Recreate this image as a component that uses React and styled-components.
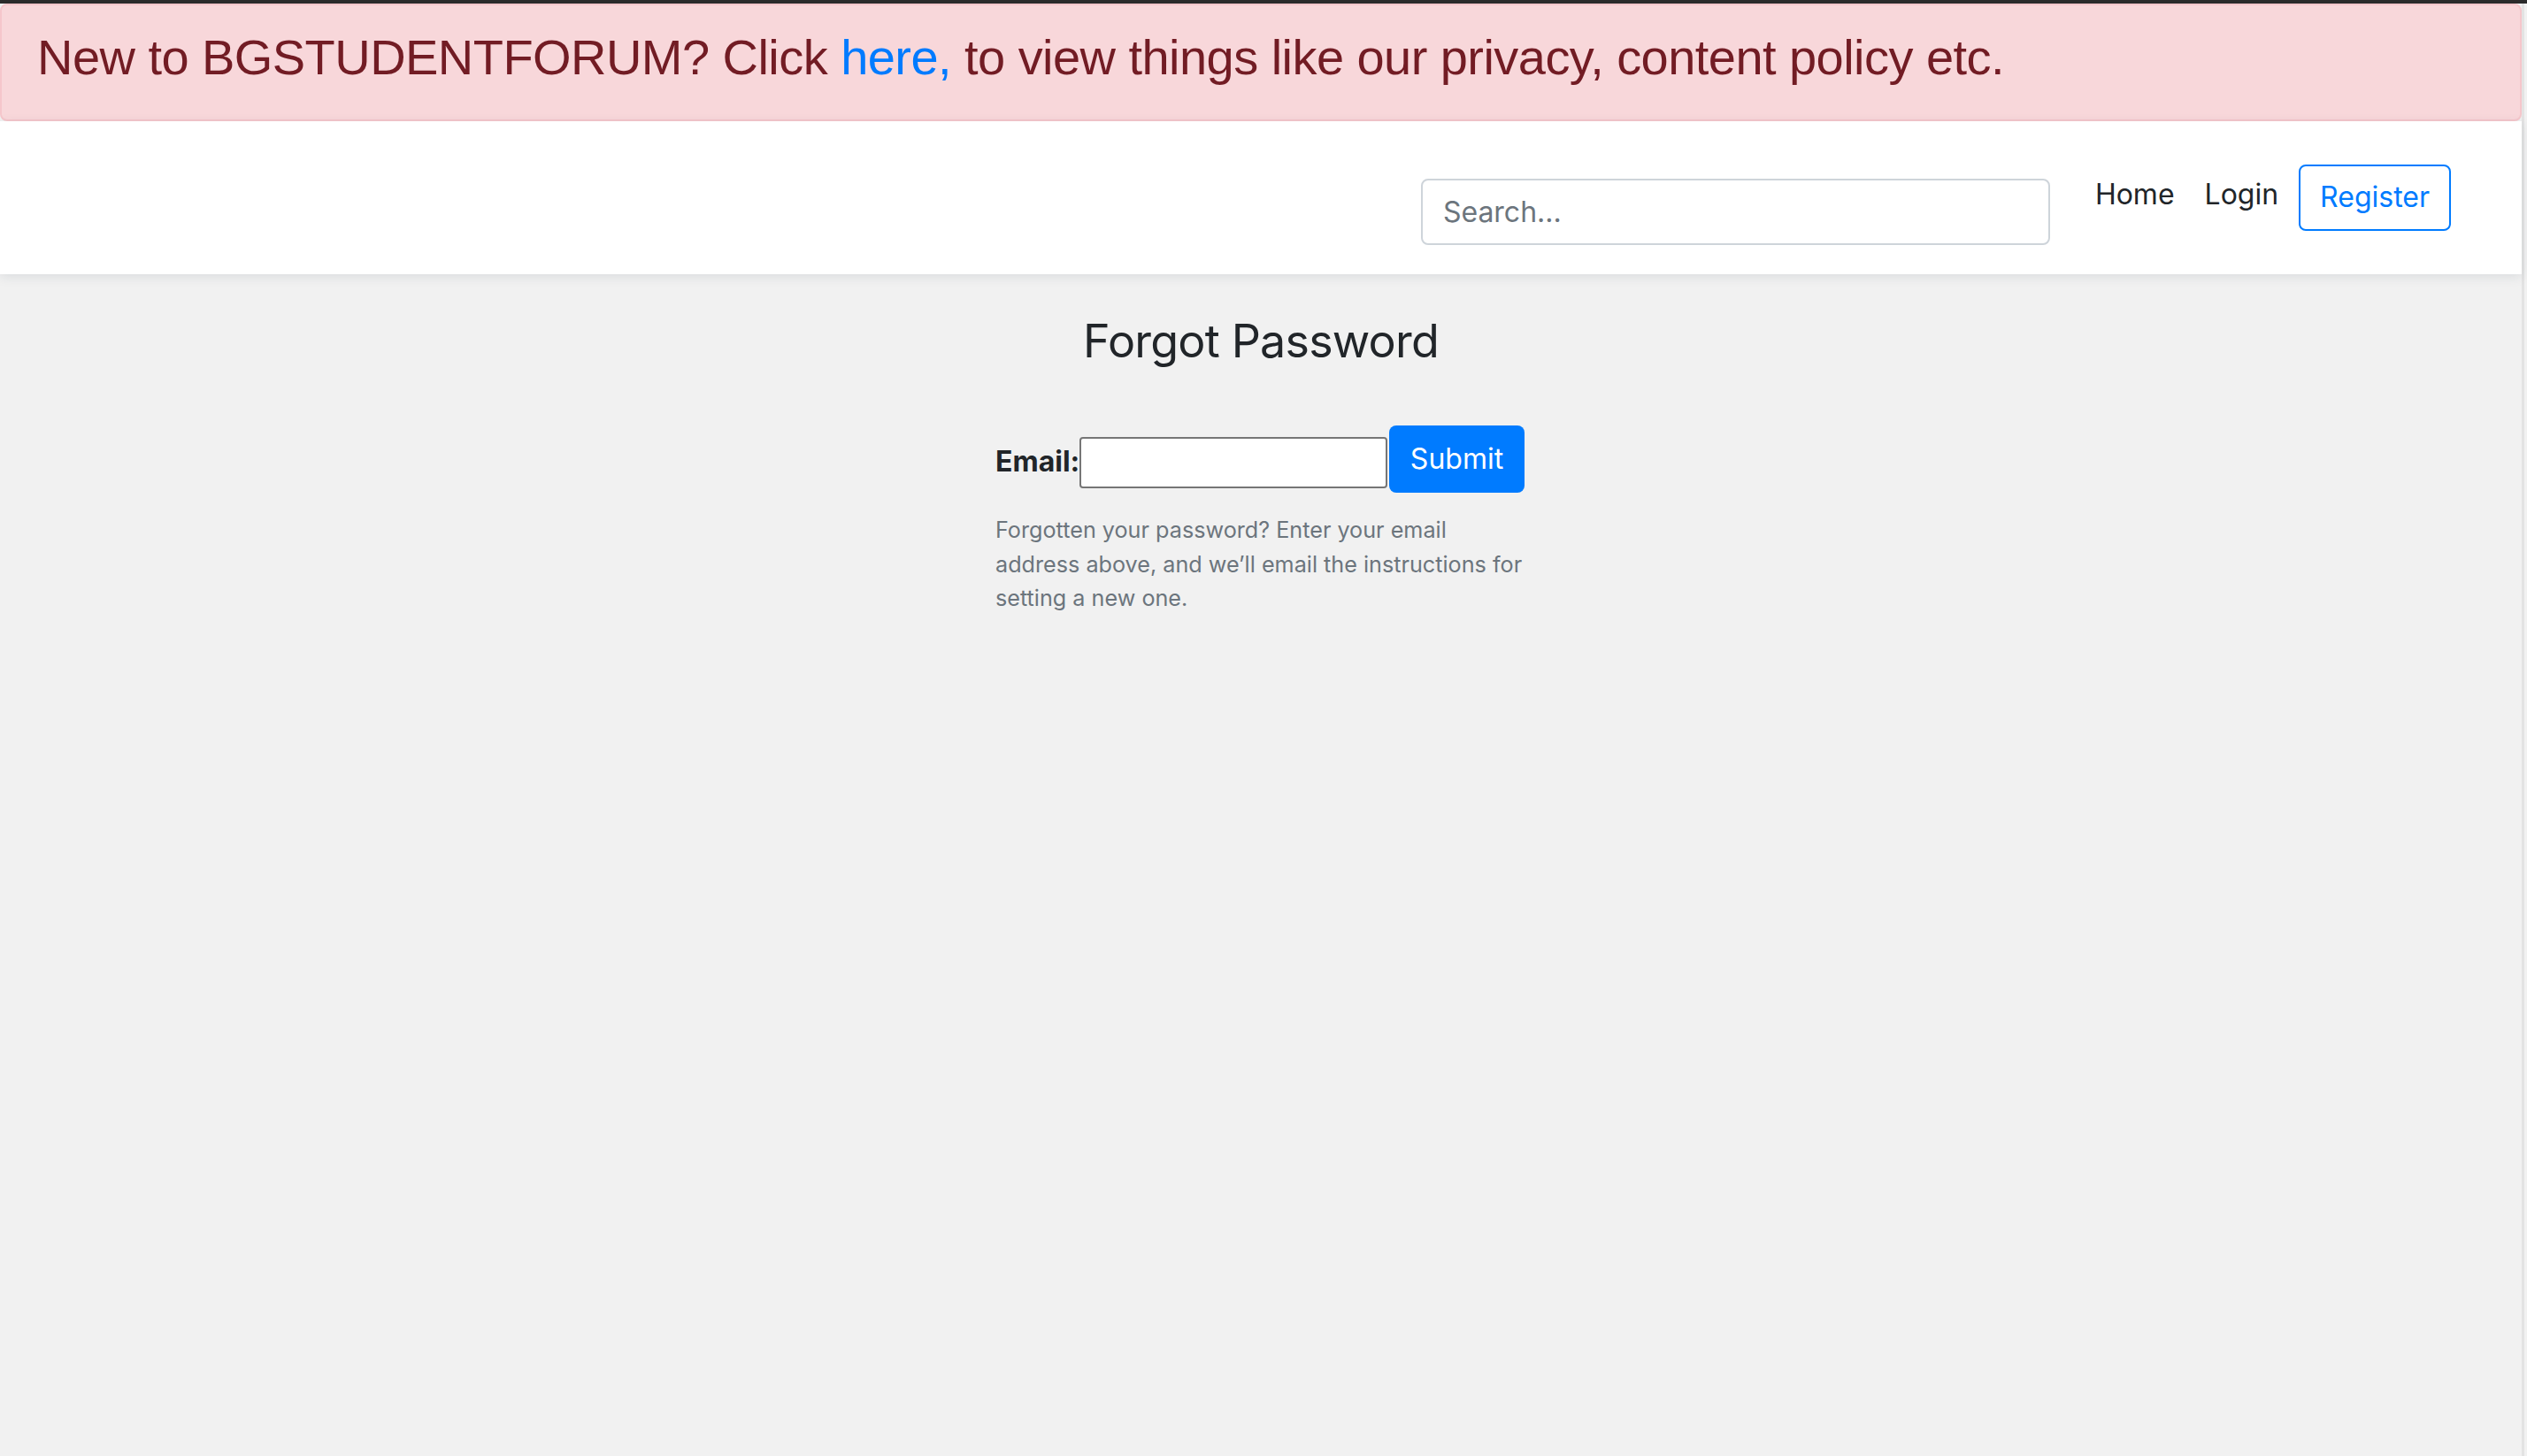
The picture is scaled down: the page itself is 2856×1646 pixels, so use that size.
import React from "react";
import styled, { createGlobalStyle } from "styled-components";

const GlobalStyle = createGlobalStyle`
  html, body {
    margin: 0;
    padding: 0;
    background: #f1f1f1;
  }
  body {
    border-top: 4px solid #2b2b2b;
    font-family: Inter, "Noto Sans", "Liberation Sans", sans-serif;
    color: #212529;
    min-height: 100vh;
    box-sizing: border-box;
  }
  * { box-sizing: border-box; }
`;

const Shell = styled.div`
  min-height: calc(100vh - 4px);
  border-right: 3px solid #e3e3e3;
  margin-right: 3px;
`;

const Alert = styled.div`
  background: #f8d7da;
  border: 2px solid #f5c6cb;
  border-radius: 8px;
  color: #721c24;
  font-family: "Liberation Sans", Arial, sans-serif;
  font-size: 56px;
  letter-spacing: -0.55px;
  line-height: 84px;
  padding: 17px 40px 26px;
  height: 133px;
  white-space: nowrap;
`;

const AlertLink = styled.a`
  color: #007bff;
  text-decoration: none;
`;

const Navbar = styled.nav`
  position: relative;
  z-index: 1;
  background: #fff;
  height: 173px;
  display: flex;
  justify-content: flex-end;
  align-items: flex-start;
  padding: 49px 80px 0 0;
  box-shadow: 0 3px 12px rgba(30, 50, 70, 0.1);
`;

const SearchInput = styled.input`
  width: 711px;
  height: 75px;
  margin-top: 16px;
  border: 2px solid #ced4da;
  border-radius: 8px;
  padding: 0 23px;
  font-family: inherit;
  font-size: 32px;
  color: #495057;
  background: #fff;
  outline: none;
  &::placeholder { color: #6c757d; }
`;

const NavList = styled.div`
  display: flex;
  align-items: flex-start;
  margin-left: 34px;
`;

const NavLink = styled.a`
  font-size: 32px;
  line-height: 48px;
  color: #212529;
  text-decoration: none;
  padding: 0 17px;
  margin-top: 10px;
`;

const OutlineButton = styled.a`
  display: inline-block;
  height: 75px;
  border: 2px solid #007bff;
  border-radius: 8px;
  color: #007bff;
  font-size: 32px;
  line-height: 48px;
  padding: 11px 22px;
  margin-left: 6px;
  text-decoration: none;
`;

const Main = styled.main`
  width: 600px;
  margin: 0 auto;
  padding-top: 45px;
`;

const Heading = styled.h3`
  margin: 0 -100px 64px;
  text-align: center;
  font-size: 52px;
  letter-spacing: -0.8px;
  font-weight: 400;
  line-height: 1.2;
  color: #212529;
`;

const FormRow = styled.form`
  display: flex;
  align-items: flex-start;
`;

const Label = styled.label`
  width: 95px;
  flex: none;
  margin-top: 17px;
  font-size: 32px;
  font-weight: 700;
  line-height: 48px;
  white-space: nowrap;
`;

const EmailInput = styled.input`
  width: 348px;
  height: 58px;
  margin-top: 13px;
  border: 2px solid #767676;
  border-radius: 4px;
  background: #fff;
  font-size: 26px;
  padding: 0 6px;
  outline: none;
`;

const SubmitButton = styled.button`
  width: 153px;
  height: 76px;
  margin-left: 2px;
  border: none;
  border-radius: 8px;
  background: #007bff;
  color: #fff;
  font-family: inherit;
  font-size: 32px;
  line-height: 48px;
  padding: 0;
`;

const HelpText = styled.p`
  margin: 23px 0 0;
  width: 604px;
  font-size: 25.2px;
  line-height: 38.4px;
  color: #6c757d;
`;

export default function App() {
  return (
    <>
      <GlobalStyle />
      <Shell>
        <Alert>
          New to BGSTUDENTFORUM? Click <AlertLink href="#">here,</AlertLink> to view things like our privacy, content policy etc.
        </Alert>
        <Navbar>
          <SearchInput type="text" placeholder="Search..." />
          <NavList>
            <NavLink href="#">Home</NavLink>
            <NavLink href="#">Login</NavLink>
            <OutlineButton href="#">Register</OutlineButton>
          </NavList>
        </Navbar>
        <Main>
          <Heading>Forgot Password</Heading>
          <FormRow onSubmit={(e) => e.preventDefault()}>
            <Label htmlFor="email">Email:</Label>
            <EmailInput id="email" type="email" />
            <SubmitButton type="submit">Submit</SubmitButton>
          </FormRow>
          <HelpText>
            Forgotten your password? Enter your email address above, and we’ll email the instructions for setting a new one.
          </HelpText>
        </Main>
      </Shell>
    </>
  );
}
